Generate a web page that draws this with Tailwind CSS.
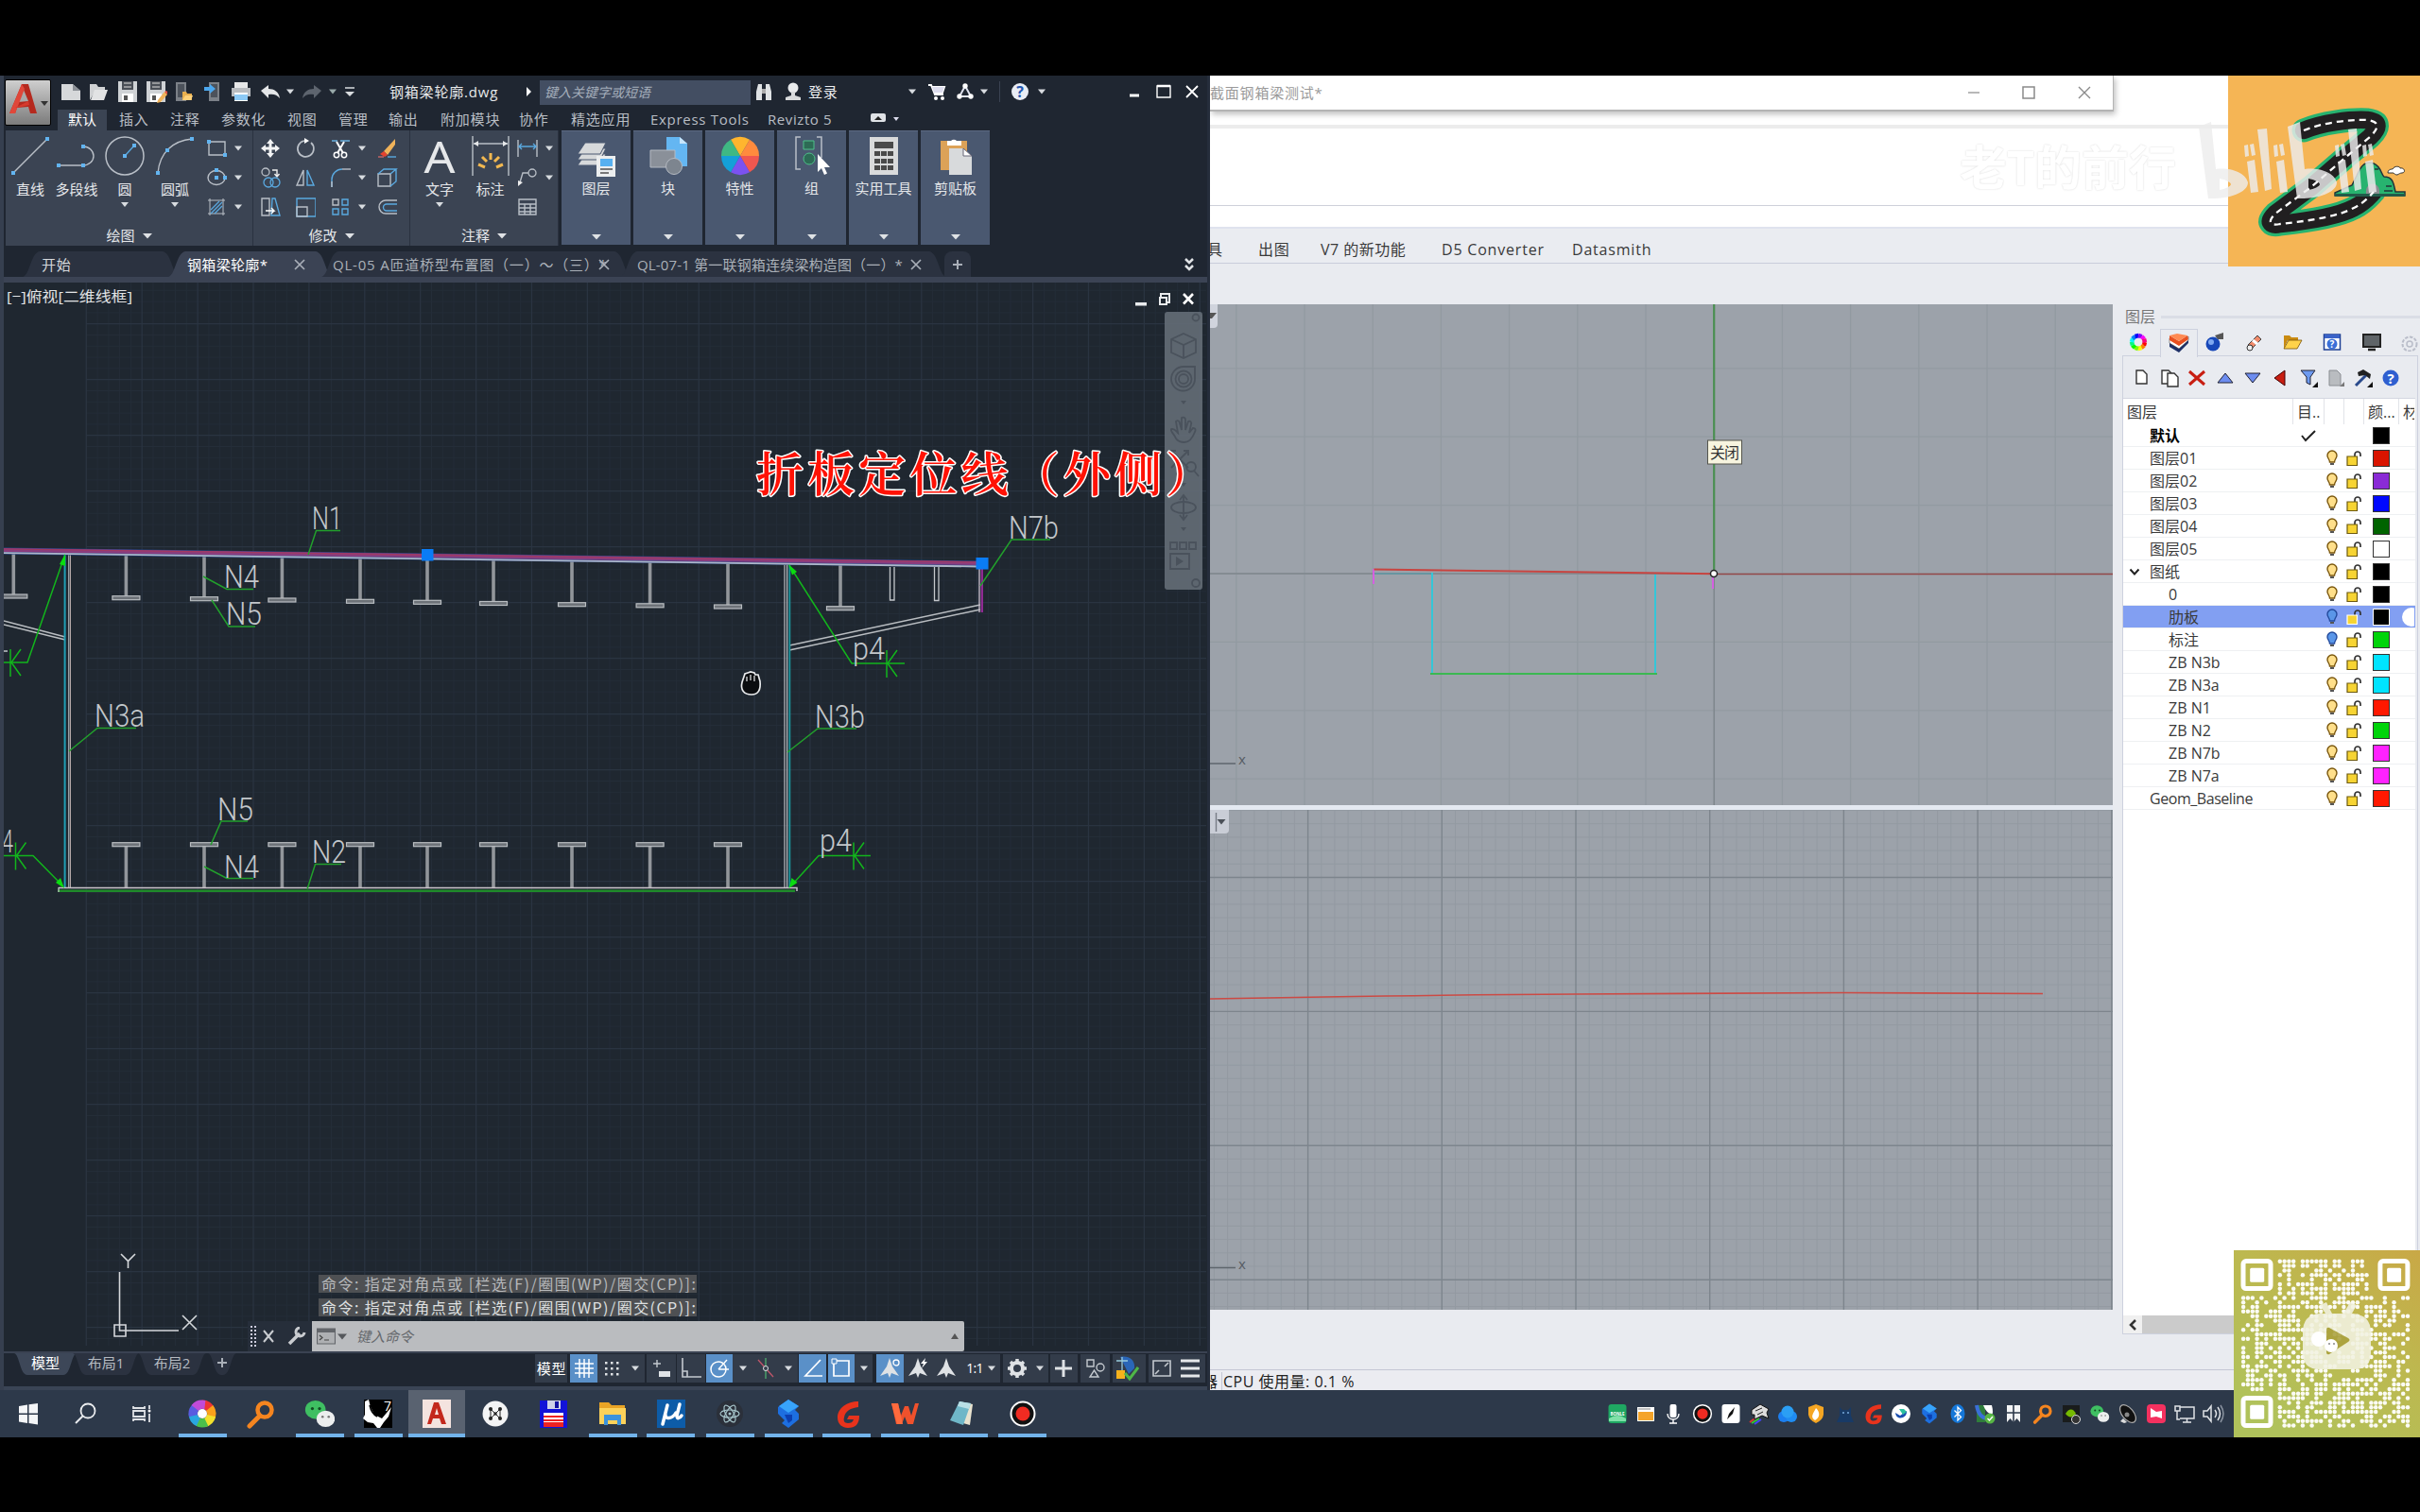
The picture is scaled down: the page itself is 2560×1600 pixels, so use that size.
<!DOCTYPE html>
<html lang="zh-CN">
<head>
<meta charset="utf-8">
<title>钢箱梁轮廓.dwg</title>
<script src="https://cdn.jsdelivr.net/npm/@tailwindcss/browser@4"></script>
</head>
<body class="bg-black w-[2560px] h-[1600px] overflow-hidden font-['Open_Sans','Noto_Sans_CJK_SC',sans-serif]">
<div class="flex flex-col w-[2560px] h-[1521px] pt-[80px] relative">
  <div class="flex h-[1391px]">
    <!-- CAD window -->
    <section class="w-[1280px] h-[1391px] bg-[#1f2631] border-l-[4px] border-r-[3px] border-[#363f4f] border-r-[#252d3b] flex flex-col relative text-[15px] leading-[18px] text-[#d6d9dd] overflow-hidden">
      <div id="title" class="h-[34px] flex items-center"></div>
      <div id="tabs" class="h-[24px] flex items-end"></div>
      <div id="ribbon" class="h-[122px] flex"></div>
      <div id="files" class="h-[33px] pt-[6px] flex items-stretch"></div>
      <div class="h-[6px] bg-[#3b4354] -mx-1 shrink-0"></div>
      <div class="h-[1131px] relative shrink-0">
        <svg id="cad" class="block" width="1273" height="1131" viewBox="4 299 1273 1131"></svg>
        <div class="absolute left-[333px] top-[1050px] flex flex-col gap-[6px]" id="hist"></div>
        <div class="absolute left-[258px] top-[1099px] flex h-[32px]" id="cmd"></div>
      </div>
      <div class="h-[37px] border-t-[2px] border-[#3a4252] flex items-start shrink-0">
        <div id="layouts" class="w-[562px] h-[22px] flex items-center"></div>
        <div id="status" class="h-[31px] flex items-center pt-px"></div>
      </div>
      <div class="h-[4px] bg-[#3a4455] -mx-1 shrink-0"></div>
      <div class="absolute left-px top-[4px] w-[49px] h-[49px] rounded-[2px] bg-gradient-to-b from-[#cfcfcf] to-[#7c7c7c] border border-black">
        <svg width="47" height="47" viewBox="0 0 47 47"><path d="M4 35L17 4h7l9 31h-7l-2-7-12 1-2 6z" fill="#b5291e"/><path d="M13 23l6-13 5 12z" fill="#a9a9a9"/><path d="M17 4L4 35h6L20 9z" fill="#e0473a"/><path d="M10 29l14-7 1 4-13 3z" fill="#d63a2d"/><path d="M37 22h8l-4 5z" fill="#333"/></svg>
      </div>
    </section>
    <!-- Modelling window -->
    <section class="w-[1280px] h-[1391px] bg-[#e9ebf0] flex flex-col relative overflow-hidden text-[#3a3a3a] text-[16px] leading-[20px]">
      <div class="h-[162px] bg-white flex flex-col shrink-0">
        <div id="rtitle" class="h-[38px] w-[956px] bg-white border-b-2 border-r border-[#b4b4b4] shadow-[2px_3px_6px_rgba(0,0,0,0.25)] flex items-center text-[15px] text-[#9a9a9a]"></div>
        <div class="mt-[14px] h-[4px] bg-[#ececec]"></div>
        <div class="mt-[81px] h-px bg-[#ced0da]"></div>
        <div class="mt-[22px] h-[2px] bg-[#dfe3ee]"></div>
      </div>
      <div id="rtabs" class="h-[37px] border-b-[1.5px] border-[#c9ccdb] bg-[#eaecf1] flex items-center shrink-0 pt-[7px]"></div>
      <div class="flex pt-[43px] h-[1170px] shrink-0">
        <div class="w-[955px] flex flex-col gap-[5px] bg-[#e4e9f1] h-[1064px]">
          <svg id="vp1" class="block" width="955" height="530" viewBox="1280 322 955 530"></svg>
          <svg id="vp2" class="block" width="955" height="529" viewBox="1280 857 955 529"></svg>
        </div>
        <div class="ml-[10px] w-[315px] flex flex-col">
          <div class="h-[26px] flex items-center pl-[3px] gap-[6px] text-[#777]"><span>图层</span><i class="block h-[3px] flex-1 bg-[#dadde6]"></i></div>
          <div id="ptabs" class="h-[28px] flex items-center relative"></div>
          <div class="border border-[#cdd1de] w-[313px] h-[1036px] flex flex-col pr-[2px]">
            <div id="ptools" class="h-[45px] pt-[2px] flex items-center border-b border-[#d3d6e0]"></div>
            <div class="bg-white flex-1 flex flex-col">
              <div id="phead" class="h-[27px] flex items-stretch"></div>
              <div id="rows" class="flex flex-col"></div>
            </div>
            <div class="h-[19px] flex bg-[#cbcbcb]"><div class="w-[20px] bg-[#f0f0f0] flex items-center justify-center"><svg width="12" height="14" viewBox="0 0 12 14"><path d="M9 2L4 7l5 5" fill="none" stroke="#333" stroke-width="2.5"/></svg></div></div>
          </div>
        </div>
      </div>
      <div id="rstatus" class="border-t border-[#c4c7d4] h-[22px] pt-[2px] bg-[#ebecf1] flex items-center shrink-0 text-[#222]"></div>
      <div class="absolute left-[793px] top-[62px] text-[50px] leading-[70px] font-bold text-white whitespace-nowrap [text-shadow:0_0_2px_#d4d4d4]">老T的前行</div>
      <svg class="absolute left-[1077px] top-0" width="203" height="202" viewBox="2357 80 203 202" id="zlogo"></svg>
      <svg class="absolute left-[1040px] top-[40px]" width="210" height="100" viewBox="2320 120 210 100" id="bili"></svg>
    </section>
  </div>
  <div id="task" class="h-[50px] bg-[#2d394a] flex items-stretch"></div>
  <svg class="absolute left-[2363px] top-[1323px]" id="qr" width="197" height="198" viewBox="0 0 197 198"></svg>
</div>
<script>
const $=id=>document.getElementById(id);
const T=(x,w,s,c='')=>[x,w,`<span data-fit="${w}" class="whitespace-nowrap ${c}">${s}</span>`];
const G=(w,h,b)=>`<svg class="block shrink-0" width="${w}" height="${h}" viewBox="${-w/2} ${-h/2} ${w} ${h}" fill="none">${b}</svg>`;
const I=(cx,w,h,b)=>[cx-w/2,w,G(w,h,b)];
// children laid out in flow; the margin is the distance from the previous child
const cells=(start,items,c='flex items-center')=>{let p=start,o='';for(const [x,w,h,k] of items){o+=`<div class="${c} shrink-0 ${k||''}" style="width:${w}px;margin-left:${x-p}px">${h}</div>`;p=x+w}return o};
const car=(x,c='#d8dce0',s=4)=>I(x,10,8,`<path d="M${-s} -2.5h${2*s}l${-s} ${s+1}z" fill="${c}"/>`);
const W='#d9dcdf',B='#5aa9e0';

// ---------- title bar ----------
const disk=`<path d="M-10 -11h20v22h-20z" fill="#cfd2d5"/><path d="M-6 -11h12v9h-12z" fill="#4a4f57"/><path d="M-4 -9h8M-4 -5h8" stroke="#ddd"/><path d="M-6 2h12v9h-12z" fill="#fff"/><path d="M-4 4h4v5h-4z" fill="#555"/>`;
$('title').innerHTML=cells(4,[
 I(75,22,22,`<path d="M-10 -8h12l8 7v10h-20z" fill="#d6d8da"/><path d="M2 -8v7h8z" fill="#8b8f95"/>`),
 I(104,22,22,`<path d="M-9 9v-17h7l2 3h7v4h-10z" fill="#d0d2d4"/><path d="M-8 9l4-11h14l-4 11z" fill="#e2e3e4"/>`),
 I(135,22,22,disk),
 I(165,24,24,disk+`<path d="M2 9l7-9 3 3-7 8-4 1z" fill="#f0b35a"/><path d="M9 0l3 3 1-2-2-2z" fill="#e54"/>`),
 I(194,22,24,`<path d="M-8 -10h11v20h-11z" fill="#7c8188"/><path d="M-6 -8h7v14h-7z" fill="#4c525b"/><path d="M-1 9v-9h4l1 2h5v7z" fill="#e9b04f"/><path d="M-1 9l3-5h8l-2 5z" fill="#ffd27a"/>`),
 I(225,22,24,`<path d="M-4 -10h11v20h-11z" fill="#7c8188"/><path d="M-2 -8h7v14h-7z" fill="#4c525b"/><path d="M-9 -5h6v-3l6 5-6 5v-3h-6z" fill="#4ba7ee"/>`),
 I(255,22,22,`<path d="M-7 -10h14v6h-14z" fill="#e6e7e8"/><path d="M-10 -4h20v9h-20z" fill="#b9bcc0"/><path d="M-7 1h14v9h-14z" fill="#fff"/><path d="M-7 3h14v6h-14z" fill="#8cc9f5"/>`),
 I(286,22,16,`<path d="M-10 -1l8-6v4c6 0 11 3 12 10-3-4-7-5-12-4v4z" fill="#e4e6e8"/>`),car(307),
 I(330,22,16,`<path d="M10 -1l-8-6v4c-6 0-11 3-12 10 3-4 7-5 12-4v4z" fill="#5d646e"/>`),car(352,'#9aa'),
 I(370,12,12,`<path d="M-5 -4h10" stroke="${W}" stroke-width="1.5"/><path d="M-5 0h10l-5 5z" fill="${W}"/>`),
 T(412,110,'钢箱梁轮廓.dwg','text-[#e6e8ea]'),
 I(560,8,12,`<path d="M-3 -5l5 5-5 5z" fill="#fff"/>`),
 [571,223,'<span class="whitespace-nowrap italic text-[14px] text-[#a4adba] ml-[5px]">键入关键字或短语</span>','bg-[#434e62] h-[26px] mt-px'],
 I(808,20,20,`<path d="M-8 9v-9l2-8h4v17zM8 9v-9l-2-8h-4v17z" fill="#dfe2e4"/><path d="M-2 -3h4v5h-4z" fill="#aaa"/>`),
 I(839,18,22,`<circle cy="-4" r="5.5" fill="#e8eaec"/><path d="M-2 0h4v4l6 2v3h-16v-3l6-2z" fill="#d8dadc"/>`),
 T(855,31,'登录','text-[#eceef0]'),car(965),
 I(991,20,20,`<path d="M-9 -7h3l4 10h9M-5 -5h13l-2 6h-9" stroke="#fff" stroke-width="2"/><path d="M-5 -5h13l-2 6h-9z" fill="#dde"/><circle cx="-1" cy="7" r="2" fill="#fff"/><circle cx="6" cy="7" r="2" fill="#fff"/>`),
 I(1021,22,20,`<path d="M0 -6L-6 5H6z" stroke="#dfe3f0" stroke-width="2"/><circle cy="-6" r="2.7" fill="#fff"/><circle cx="-6" cy="5" r="2.7" fill="#fff"/><circle cx="6" cy="5" r="2.7" fill="#fff"/>`),car(1041),
 [1057,1,'','bg-[#3a4252] h-[22px]'],
 I(1079,20,20,`<circle r="9" fill="#e9edf4"/><text y="6" text-anchor="middle" font-size="16" font-weight="700" fill="#2456b0">?</text>`),car(1102),
 I(1200,12,12,`<path d="M-5 4h10" stroke="#fff" stroke-width="3"/>`),
 I(1231,18,18,`<path d="M-7 -6h14v12h-14z" stroke="#fff" stroke-width="1.4"/><path d="M-7 -6h14" stroke="#fff" stroke-width="2.5"/>`),
 I(1261,16,16,`<path d="M-6 -6L6 6M6 -6L-6 6" stroke="#fff" stroke-width="1.8"/>`)]);

const tb=(x,w,s)=>[x,w,`<span data-fit="${w}" class="whitespace-nowrap text-[#b9bec5]">${s}</span>`,'h-[22px] pb-[2px]'];
$('tabs').innerHTML=cells(4,[[61,52,'<span class="text-white ml-[11px] whitespace-nowrap">默认</span>','bg-[#3b4453] h-[22px] pb-[2px]'],
 tb(126,30,'插入'),tb(180,30,'注释'),tb(234,46,'参数化'),tb(304,30,'视图'),tb(358,30,'管理'),tb(411,31,'输出'),tb(466,60,'附加模块'),tb(549,31,'协作'),tb(604,60,'精选应用'),tb(688,99,'Express Tools'),tb(812,67,'Revizto 5'),
 I(929,18,22,`<rect x="-8" y="-7" width="16" height="9" rx="2" fill="#dfe2e6"/><path d="M-4 0h8l-4-4z" fill="#222"/>`),I(948,10,20,`<path d="M-3 -4h6l-3 4z" fill="#dde"/>`)]);

// ---------- ribbon ----------
const big=(w,svg,label,c)=>`<div class="shrink-0 flex flex-col items-center text-[#e4e6e9]" style="width:${w}px"><div class="h-[53px] flex items-center">${svg}</div><span class="whitespace-nowrap leading-[18px]">${label}</span>${c?G(10,14,'<path d="M-4 -2h8l-4 5z" fill="#d8dce0"/>'):''}</div>`;
const small=(w,icons)=>`<div class="shrink-0 flex flex-col pt-[3px]" style="width:${w}px">${icons.map(([s,c])=>`<div class="h-[31px] flex items-center gap-[7px]">${G(22,22,s)}${c?G(10,8,'<path d="M-4 -2.5h8l-4 5z" fill="#d8dce0"/>'):''}</div>`).join('')}</div>`;
const dot=(x,y)=>`<path d="M${x-2} ${y-2}h4v4h-4z" fill="#62b4f0"/>`;
const panel=(w,inner,title)=>`<div class="shrink-0 bg-[#3b4453] border-r border-[#2a3240] flex flex-col" style="width:${w}px"><div class="h-[98px] flex">${inner}</div><div class="flex-1 flex items-start justify-center gap-[8px] pt-[4px] text-[#e4e6e9]"><span>${title}</span>${G(10,18,'<path d="M-5 -2h10l-5 5.5z" fill="#dfe2e5"/>')}</div></div>`;
const S=(d,c='#b9bfc7',w=1.4)=>`<path d="${d}" stroke="${c}" stroke-width="${w}"/>`;
const draw=panel(262,`<div class="w-[2px]"></div>`+
 big(48,G(44,44,S('M-18 18L18 -18')+dot(-18,18)+dot(18,-18)),'直线')+
 big(50,G(44,44,S('M-19 10H7A11 10 0 0 0 7 -10')+dot(-19,10)+dot(7,10)+dot(7,-10)),'多段线')+
 big(52,G(44,44,`<circle r="20" stroke="#b9bfc7" stroke-width="1.5"/>`+S('M0 0L10 -11',B)+dot(0,0)+dot(10,-11)),'圆',1)+
 big(54,G(44,44,S('M-18 18C-16 -4 -2 -16 18 -18')+dot(-18,18)+dot(-8,-6)+dot(18,-18)),'圆弧',1)+`<div class="w-[6px]"></div>`+
 small(48,[[S('M-8 -7h17v14h-17z')+dot(-8,-7)+dot(9,7),1],[`<ellipse rx="9" ry="7.5" stroke="#b9bfc7" stroke-width="1.4"/>`+dot(0,0)+dot(0,-8)+dot(9,0),1],[S('M-9 -7h18M-9 7h18M-7 -9v18M7 -9v18','#b9bfc7',1)+S('M-6 3l9-9M-6 7l12-12M-2 7l8-8',B,1.3),1]]),'绘图');
const mod=panel(166,`<div class="w-[7px]"></div>`+
 small(37,[[`<path d="M0 -10l4 5h-2.5v3.5h3.5v-2.5l5 4-5 4v-2.5h-3.5v3.5h2.5l-4 5-4-5h2.5v-3.5h-3.5v2.5l-5-4 5-4v2.5h3.5v-3.5h-2.5z" fill="#f2f3f4"/>`],[`<circle cx="-5" cy="-6" r="4" stroke="#b9bfc7" stroke-width="1.3"/>`+S('M2 -8h5v6M4.500 -4l2.500 3 2.500 -3','#eee')+`<circle cx="-2" cy="5" r="5" stroke="${B}" stroke-width="1.3"/><circle cx="5" cy="5" r="5" stroke="${B}" stroke-width="1.3"/>`],[S('M-9 -9h8v18h-8z')+S('M2 -9h3l5 18h-9z',B)+S('M-5 4h9l-3-3M4 4l-3 3','#fff')]])+
 small(37,[[S('M6 -6A8.500 8.500 0 1 1 -1 -8','#b9bfc7',1.7)+`<path d="M-1 -11l5 3-5 3z" fill="#fff"/>`],[S('M-2 -8v16h-7z')+S('M2 -8v16h7z',B)],[S('M-9 -9h20v19h-20z',B)+S('M-9 0h11v10h-11z')]])+
 small(50,[[S('M-9 -8h6M0 -8h10','#6bb0e0',1.3)+S('M-4 -7L3 5M4 -7L-3 5','#fff',2)+`<circle cx="-4" cy="7" r="2.7" stroke="#fff" stroke-width="1.5"/><circle cx="4" cy="7" r="2.7" stroke="#fff" stroke-width="1.5"/>`,1],[S('M-9 10v-8A11 11 0 0 1 2 -9',B)+S('M2 -9h9')+S('M-9 10V4'),1],[S('M-8 -8h6v6h-6z')+S('M2 -8h6v6h-6zM-8 2h6v6h-6zM2 2h6v6h-6z',B),1]])+
 small(30,[[`<path d="M-4 3L8 -10v6L0 7z" fill="#f0b35a"/><path d="M-4 3l4 4-3 2-5-3z" fill="#e5432f"/>`+S('M-10 9h6','#c66')+S('M0 9h9',B)],[S('M-10 -4h13v13h-13z')+S('M-10 -4l6-5h13l-6 5M9 -9v13l-6 5',B)],[S('M10 -7h-12a7 7 0 0 0 0 14h12')+S('M10 -3h-11a3.500 3.500 0 0 0 0 7h11',B)]]),'修改');
const ray=[[-13,5,-6,9],[-9,-3,-4,3],[0,-7,0,1],[9,-3,4,3],[13,5,6,9]].map(a=>`M${a[0]} ${a[1]+4}L${a[2]} ${a[3]+3}`).join('');
const ann=panel(157,`<div class="w-[3px]"></div>`+
 big(56,G(40,44,`<text y="18" text-anchor="middle" font-size="46" textLength="33" lengthAdjust="spacingAndGlyphs" fill="#e6e8ea" font-family="Noto Sans">A</text>`),'文字',1)+
 big(51,G(44,44,S('M-19 -21v42M19 -21v42M-18 -13h36')+`<path d="M-18 -13l5-3v6zM18 -13l-5-3v6z" fill="#e6e8ea"/>`+S(ray,'#f2b850',3)),'标注')+`<div class="w-[3px]"></div>`+
 small(42,[[S('M-10 -9v18M10 -9v18')+S('M-9 -2h18M-6 -5l-3 3 3 3M6 -5l3 3-3 3',B),1],[`<circle cx="5" cy="-5" r="4" stroke="#b9bfc7" stroke-width="1.3"/>`+S('M1 -5h-6l-3 10')+`<path d="M-10 9l0-6 5 2z" fill="#eee"/>`,1],[S('M-9 -8h18v16h-18zM-9 -3h18M-9 1h18M-9 5h18M-3 -3v11M3 -3v11')]]),'注释');
const col=(svg,label)=>`<div class="shrink-0 w-[73px] h-[121px] bg-[#4a5870] border-t border-[#5b6982] ml-[3px] flex flex-col items-center text-[#e4e6e9]"><div class="h-[51px] flex items-center">${svg}</div><span class="whitespace-nowrap leading-[18px]">${label}</span><div class="flex-1"></div>${G(10,16,'<path d="M-5 -3h10l-5 5.500z" fill="#dfe2e5"/>')}</div>`;
const pie=['#ffb52e','#ff8b3d','#f0574f','#7b52f0','#14a0d8','#3fb883'].map((c,i)=>{const r=20,a=(i*60-120)*Math.PI/180,b=a+Math.PI/3;return`<path d="M0 0L${r*Math.cos(a)} ${r*Math.sin(a)}A${r} ${r} 0 0 1 ${r*Math.cos(b)} ${r*Math.sin(b)}z" fill="${c}"/>`}).join('');
$('ribbon').innerHTML=`<div class="w-[2px] shrink-0"></div>`+draw+mod+ann+
 col(G(50,46,[10,4,-2].map(y=>`<path d="M-20 ${y}l8-12h22l-6 12z" fill="#d7d9db" stroke="#4a5870"/>`).join('')+`<path d="M0 0h20v22H0z" fill="#eceeef"/><path d="M4 3h13v8H4z" fill="#57b0f0"/><path d="M4 14h13M4 18h9" stroke="#777" stroke-width="2"/>`),'图层')+
 col(G(44,42,`<path d="M-2 -20h14l8 7v24h-22z" fill="#64b6f2"/><path d="M12 -20v7h8z" fill="#c7e5fb"/><path d="M-19 -6h26v18h-26z" fill="#8a9099" stroke="#b5bac2"/><circle cx="6" cy="11" r="8.500" fill="#7d858f" stroke="#b5bac2"/>`),'块')+
 col(G(44,44,pie),'特性')+
 col(G(44,44,`<path d="M-12 -20h-5v34h5M5 -20h5v22" stroke="#b9bfc7" stroke-width="1.5"/><path d="M-9 -16h11v9h-11z" fill="#2d6b55" stroke="#4fc08a"/><circle cx="-3" cy="3" r="6" fill="#2d6b55" stroke="#4fc08a"/><path d="M6 -2v19l4-4 3 7 3-1.500-3-6.500h6z" fill="#fff"/>`),'组')+
 col(G(40,44,`<path d="M-15 -20h30v40h-30z" fill="#d9dadb"/><path d="M-10 -15h20v7h-20z" fill="#4a4a4a"/>`+[-10,-3,4].map(x=>[-5,3,10].map(y=>`<path d="M${x} ${y}h6v5h-6z" fill="#4a4a4a"/>`).join('')).join('')),'实用工具')+
 col(G(44,44,`<path d="M-16 -16h28v31h-28z" fill="#dca258"/><path d="M-9 -16h4a4 4 0 0 1 6 0h5v5h-15z" fill="#fff"/><path d="M-7 -8h15l9 8v20h-24z" fill="#d8dadc"/><path d="M8 -8v8h9z" fill="#fff" stroke="#667"/>`),'剪贴板');

// ---------- document tabs ----------
const ft=(w,bg,s)=>`<div class="relative shrink-0 -mr-[12px] flex items-center" style="width:${w}px"><svg class="absolute inset-0" width="${w}" height="27" viewBox="0 0 ${w} 27"><path d="M0 27C8 25 8 2 18 0H${w-18}C${w-8} 2 ${w-8} 25 ${w} 27z" fill="${bg}"/></svg>${s}</div>`;
const fx=`<svg class="relative shrink-0" width="12" height="14" viewBox="0 0 12 14"><path d="M1 2l10 10M11 2L1 12" stroke="#a9afb8" stroke-width="1.700"/></svg>`;
const fl=(w,ml,c,t)=>`<div class="relative shrink-0 flex ${ml}" style="width:${w}px"><span class="whitespace-nowrap ${c}" data-fit="${w}">${t}</span></div>`;
$('files').innerHTML=`<div class="w-[20px] shrink-0"></div>`+
 ft(166,'#2b3240',fl(30,'ml-[20px]','','开始'))+
 ft(174,'#3b4354',fl(82,'ml-[20px]','text-white','钢箱梁轮廓*')+'<div class="w-[31px]"></div>'+fx)+
 ft(328,'#2b3240',fl(271,'ml-[12px]','text-[#aab0b8]','QL-05 A匝道桥型布置图（一）～（三）*')+'<div class="w-[10px]"></div>'+fx)+
 ft(345,'#2b3240',fl(280,'ml-[18px]','text-[#aab0b8]','QL-07-1 第一联钢箱连续梁构造图（一）*')+'<div class="w-[9px]"></div>'+fx)+
 `<div class="ml-[10px] w-[28px] bg-[#2b3240] rounded-t-[8px] flex items-center justify-center">${G(12,12,S('M-5 0h10M0 -5v10','#a9afb8',2))}</div><div class="w-[225px]"></div><div class="flex items-center">${G(12,18,S('M-4 -6l4 4 4-4M-4 1l4 4 4-4','#dfe2e5',2.500))}</div>`;

// ---------- drawing ----------
let s='';
let g1='',g2='';
for(let k=0,x=91.3;x<1275;k++,x=91.3+k*11.78)(k%5?g1+=`M${x.toFixed(1)} 299V1424`:g2+=`M${x.toFixed(1)} 299V1424`);
for(let k=-18,y;(y=519.7+k*11.8)<1425;k++)(k%5?g1+=`M91 ${y.toFixed(1)}H1276`:g2+=`M91 ${y.toFixed(1)}H1276`);
s+=`<rect x="4" y="299" width="1273" height="1131" fill="#1f2730"/><path d="${g1}" stroke="#242d38" fill="none"/><path d="${g2}" stroke="#2a3441" stroke-width="1.300" fill="none"/>`;
const tee=(x,y0,y1)=>{s+=`<path d="M${x} ${y0}V${y1}" stroke="#92969b" stroke-width="3.600"/><rect x="${x-14.5}" y="${(y0<800?y1:y0)-2}" width="29" height="4" fill="#6d7278" stroke="#b9bdc1" stroke-width="1.200"/>`};
[[14.3,631],[133.4,632.7],[216,633.7],[298.4,635],[381,636.3],[452,637.3],[522,638.5],[605,639.7],[687.6,640.8],[770,642],[889,643.7]].forEach(([x,y])=>tee(x,y-46,y));
[133.4,216,298.4,381,452,522,605,687.6,770].forEach(x=>tee(x,893.7,939));
const L=(d,c,w=1.5)=>s+=`<path d="${d}" stroke="${c}" stroke-width="${w}" fill="none"/>`;
L('M941.500 600v35h4.500v-35M988.500 600v35.500h4.500V600','#c4c8cc',1.3);
L('M4 657L69 674M4 661L69 677M835 683L1037 640M835 688L1037 645','#b9bdc1',1.5);
L('M72.800 587V939','#b9bdc1',1.2);L('M74.500 587V939','#b5a8a8',1);L('M68.600 587V939','#1f9fb5',2);
L('M830 598V939M832.600 598V939','#b9bdc1',1.2);L('M835.300 598V939','#1d8f98',2);
L('M62 939.500H843V943','#c9c3c9',1.5);L('M61 942.800H841','#1f8a2a',2.6);L('M62 939v5','#ccc',1.2);
L('M1036 600V648','#c4b8c8',1.4);L('M1038.800 600V648','#8e2b92',2.4);
L('M4 583L1039 597','#24468a',7);L('M4 582L1039 596','#8a3d7e',4);L('M4 581L1039 595','#a23a62',1.2);L('M4 585.200L1037 599.500','#aeb6c8',1.8);
const gr='#22a02c';
L('M360 561.500H334.500L326 587M268 623.500H240L215 610M270 663H242L224 635M144 770.500H103L73 795M262 869H234L223 894M268 929.500H240L216 917M361 914.500H333.500L325 941M1111 571H1070L1037 620M906 771H865L833 796',gr,1.5);
const g='#12b51c';
L('M957 702H901L838 603M921 905.500H866L839 935M4 701H29L67 592M4 905.500H35L64 935',g,1.5);
const kk=(x,y)=>L(`M${x} ${y-14}v29M${x+11} ${y-14}L${x+1} ${y}L${x+11} ${y+14}`,g,1.5);
kk(938,702);kk(903,905.5);kk(11,701);kk(16.5,905.5);
s+=`<g fill="#0bdc10"><path d="M834 597l9 8-5 3.500z"/><path d="M834.500 940l3-11 6 5z"/><path d="M69 586v13l-6-2z"/><path d="M68 940l-9-6 5-5z"/></g>`;
const lb=(t,x,w,y)=>s+=`<text x="${x}" y="${y}" textLength="${w}" lengthAdjust="spacingAndGlyphs" font-size="34" font-weight="300" font-family="Roboto,'Noto Sans',sans-serif" fill="#c3c7cb">${t}</text>`;
[['N1',330,32,560],['N4',237,37,622],['N5',239,38,661],['N3a',100,53,769],['N5',230,38,868],['N4',237,37,929],['N2',330,36,913],['N7b',1067,53,570],['p4',902,34,698],['N3b',862,53,770],['p4',867,34,901],['4',2,12,902]].forEach(a=>lb(...a));
L('M4 689h4','#c3c7cb',1.5);
s+=`<g fill="#0a7cf5"><rect x="446" y="581" width="12.500" height="12.500"/><rect x="1032.500" y="590" width="13" height="12.500"/></g>`;
// pan cursor
s+=`<path d="M785 722c-2 8 2 13 10 13 7 0 10-5 9-14l-2-7-3 0-1-2-4-1-3 1-3 1-1 3z" fill="#0b0d10" stroke="#e9ebed" stroke-width="1.700"/><path d="M790 716v5M794 714v6M798 715v6" stroke="#e9ebed" stroke-width="1.200"/>`;
// UCS icon
L('M126.500 1346V1408H189M121 1402h12v12h-12zM128 1327l7.500 7.500 7.500-7.500M135.500 1334.500V1342M193 1392l15 15M208 1392l-15 15','#d5d8db',1.600);
s+=`<text x="7" y="319" textLength="133" font-size="15" lengthAdjust="spacingAndGlyphs" fill="#e2e4e6">[−]俯视[二维线框]</text>`;
s+=`<path d="M1201 320h12v3.500h-12z" fill="#e9ebed"/><path d="M1228 316v-5h9v9h-3" fill="none" stroke="#e9ebed" stroke-width="2"/><path d="M1227 315h7v7h-7z" fill="none" stroke="#e9ebed" stroke-width="2"/><path d="M1252 311l10 10.500M1262 311l-10 10.500" stroke="#fff" stroke-width="2.600"/>`;
// navigation bar
s+=`<rect x="1232" y="330" width="40" height="294" rx="3" fill="#636b75" opacity=".92"/><g fill="none" stroke="#4a525c" stroke-width="1.800"><circle cx="1265" cy="336" r="3.500"/><path d="M1252 353l13 6v14l-13 6-13-6v-14zM1239 359l13 6 13-6M1252 365v14"/><path d="M1239 401a13 13 0 0 1 13-13h12v13a12.500 12.500 0 0 1-25 0z"/><circle cx="1252" cy="401" r="8.500"/><circle cx="1252" cy="401" r="5"/><path d="M1244 464c-2-5-6-7-5-10 3-1 5 2 7 4l-2-12c2-2 4 0 4 2l2 7v-13c2-1 4 0 4 2v11l3-9c2-1 4 1 3 3l-2 9 4-5c3 0 3 2 2 4-3 8-6 11-11 11s-7-1-9-4z"/><path d="M1239 477l18 18M1257 477l-18 18M1239 482v-5h5M1252 477h5v5"/><circle cx="1260" cy="494" r="5"/><path d="M1263 498l5 6M1252 525v24M1248 529l4-5 4 5M1248 545l4 5 4-5"/><ellipse cx="1252" cy="537" rx="13" ry="6"/><path d="M1238 574h7v7h-7zM1248 574h7v7h-7zM1258 574h7v7h-7zM1238 586h20v16h-20z"/><circle cx="1265" cy="617" r="4"/></g><path d="M1244 589l8 5-8 5zM1249 424h6l-3 4zM1249 511h6l-3 4zM1249 558h6l-3 4z" fill="#4a525c"/>`;
s+=`<text x="800" y="520" textLength="483" font-size="50" font-weight="600" font-family="'Noto Serif CJK SC','Noto Sans CJK SC',serif" fill="#ff1205" stroke="#fff" stroke-width="3" paint-order="stroke" stroke-linejoin="round">折板定位线（外侧）</text>`;
$('cad').innerHTML=s;

$('hist').innerHTML=['text-[#b7b9bb]','text-[#dfe0e1]'].map(c=>`<div class="w-[400px] h-[19px] pb-[2px] bg-[#4e5053] flex items-center pl-[3px] ${c}"><span data-fit="393" data-max="2" class="whitespace-nowrap text-[16px] font-['Noto_Sans_CJK_SC',sans-serif]">命令: 指定对角点或 [栏选(F)/圈围(WP)/圈交(CP)]:</span></div>`).join('');
$('cmd').innerHTML=`<div class="w-[68px] bg-[#262e3a] flex items-center">${cells(262,[
 I(268,10,24,[-10,-6,-2,2,6,10].map(y=>`<path d="M-3 ${y}h2M1 ${y}h2" stroke="#ccd" stroke-width="1.800"/>`).join('')),
 I(284,14,14,S('M-5 -6L5 6M5 -6L-5 6','#c9ccd0',2)),
 I(314,20,20,S('M-8 8L3 -3','#c9ccd0',3.500)+S('M8 -4a4.500 4.500 0 1 1 -5 -5','#c9ccd0',3))])}</div>
 <div class="w-[690px] bg-[#babcbf] rounded-r-[2px] flex items-center text-[#66696d] pb-px">${cells(330,[
 I(345,20,18,`<path d="M-9.500 -8h19v16h-19z" fill="#aeb0b3" stroke="#63666b" stroke-width="1.200"/><path d="M-9.500 -8h19v4h-19z" fill="#63666b"/>`+S('M-7 -1l3 2.500-3 2.500M-2 4h5','#444',1.200)),car(362,'#55585c',5),T(377,64,'键入命令','italic'),I(1010,10,10,'<path d="M-4 3h8l-4-6z" fill="#555"/>')])}</div>`;

// ---------- layout tabs and status bar ----------
const lt=(x,w,bg,t)=>[x,w,`<svg class="absolute left-0 top-0" width="${w}" height="23" viewBox="0 0 ${w} 23"><path d="M0 0C6 2 6 23 14 23H${w-14}C${w-6} 23 ${w-6} 2 ${w} 0z" fill="${bg}"/></svg><div class="relative w-full flex justify-center pb-[2px]">${t}</div>`,'relative h-[23px]'];
$('layouts').innerHTML=cells(4,[lt(15,66,'#3d4758','<span class="text-white">模型</span>'),lt(77,70,'#2b3240','<span class="text-[#b5bac1]">布局1</span>'),lt(146,72,'#2b3240','<span class="text-[#b5bac1]">布局2</span>'),lt(220,30,'#2b3240',G(12,12,S('M-5 0h10M0 -5v10','#a9afb8',2)))]);
const seg=(x,w,items,bl)=>[x,w,cells(x,items,'flex items-center justify-center'),'h-[30px] '+(bl||'bg-[#333c4a]')];
const blue='bg-[#5a90c8]';
const comp=`<path d="M0 -11l3 9 7 10-8-3-2 5-2-5-8 3 7-10z" fill="#dfe2e5"/>`;
$('status').innerHTML=cells(566,[
 seg(566,34,[T(568,31,'模型','text-white')]),
 seg(603,29,[I(617.5,24,24,S('M-5 -10v20M0 -10v20M5 -10v20M-10 -5h20M-10 0h20M-10 5h20','#fff',1.500))],blue),
 seg(632,50,[I(647,18,18,[-6,0,6].map(x=>[-6,0,6].map(y=>`<path d="M${x-1} ${y-1}h2.500v2.500h-2.500z" fill="#dfe2e5"/>`).join('')).join('')),car(672)]),
 seg(684,31,[I(700,22,22,S('M-9 -5h8M-5 -9v8','#c4c9cf')+`<path d="M-3 3h12v6h-12z" fill="#dfe2e5"/>`)]),
 seg(716,30,[I(731,22,22,S('M-9 -11v20h20M-9 3h5v6','#c4c9cf',1.600))]),
 seg(747,28,[I(761,24,24,`<circle cx="-1" cy="1" r="8" stroke="#fff" stroke-width="1.500"/>`+S('M-1 1L8 -9M-1 1h11','#fff'))],blue),
 seg(775,69,[car(785.500),I(810,22,22,S('M-8 -9l16 18','#c0566a',1.300)+S('M0 -11v22','#4fae6d',1.300)+`<circle r="2.500" fill="#333c4a" stroke="#dfe2e5"/>`),car(834)]),
 seg(845,29,[I(859.500,24,24,S('M8 -9L-8 8H10','#fff',1.700))],blue),
 seg(876,28,[I(890,24,24,S('M-8 -8h16v16h-16z','#fff',1.700)+`<path d="M-10 -10h5v5h-5z" fill="#5a90c8" stroke="#fff"/>`)],blue),
 seg(904,19,[car(914)]),
 seg(927,29,[I(941,24,24,comp+`<circle cx="7" cy="-6" r="3" stroke="#fff" stroke-width="1.300"/>`)],blue),
 seg(956,102,[I(971,24,24,comp+`<path d="M8 -11l-5 6h3l-2 5 6-7h-3z" fill="#fff"/>`),I(1001,22,24,comp),[1022,18,'<span class="text-white text-[14px] tracking-tighter">1:1</span>'],car(1049)]),
 seg(1061,48,[I(1076,22,22,`<circle r="6" stroke="#dfe2e5" stroke-width="4"/>`+S('M0 -10v3M0 10v-3M-10 0h3M10 0h-3M-7 -7l2 2M7 7l-2-2M7 -7l-2 2M-7 7l2-2','#dfe2e5',3.500)),car(1100)]),
 seg(1111,29,[I(1125,22,22,S('M-9 0h18M0 -9v18','#dfe2e5',3))]),
 seg(1143,31,[I(1158,22,22,S('M-8 -9h7v7h-7zM-5 9h9l-4.500-7z','#c4c9cf')+`<circle cx="6" cy="-1" r="4" stroke="#c4c9cf" stroke-width="1.400"/>`)]),
 seg(1177,35,[I(1192,26,26,`<path d="M-7 -12c10-2 16 4 15 12l-6 6z" fill="#2a66b8"/><path d="M-11 2h9v9h-9z" fill="#f5b21c"/>`+S('M-11 -8h12M-5 -12v14','#9cd',1.300)+S('M-2 5l5 6 9-12','#4fb648',3))]),
 seg(1215,60,[I(1229,22,22,S('M-9 -8h18v16h-18zM3 -2l4-4M-7 6l4-4','#c4c9cf',1.600)),I(1259,22,22,S('M-10 -8h20M-10 0h20M-10 8h20','#e6e8ea',3))])]);

// ---------- right window ----------
$('rtitle').innerHTML=cells(1280,[T(1280,109,'截面钢箱梁测试*'),I(2088,14,14,S('M-6 0h12','#9a9a9a')),I(2146,14,14,S('M-6 -6h12v12h-12z','#8a8a8a',1.500)),I(2205,14,14,S('M-6 -6L6 6M6 -6L-6 6','#8a8a8a'))]);
$('rtabs').innerHTML=cells(1280,[T(1277,16,'具'),T(1331,31,'出图'),T(1397,91,'V7 的新功能'),T(1525,101,'D5 Converter'),T(1663,78,'Datasmith')]);
$('rstatus').innerHTML=cells(1280,[T(1272,16,'器'),[1292,1,'','bg-[#c4c7d4] h-[20px]'],T(1294,136,'CPU 使用量: 0.1 %')]);
const vp=(y,h)=>`<rect x="1280" y="${y}" width="955" height="${h}" fill="#9ca2aa"/>`;
let a=vp(322,530),d='';
for(let x=1307.8;x<2235;x+=72.2)d+=`M${x.toFixed(1)} 322V852`;
for(let y=389.8;y<852;y+=72.4)d+=`M1280 ${y.toFixed(1)}H2235`;
a+=`<g fill="none"><path d="${d}" stroke="#929aa1" stroke-width="1.300"/><path d="M1280 607H1813M1813.300 607V852" stroke="#7f878d" stroke-width="1.500"/><path d="M1454 607H1516" stroke="#5f98a5" stroke-width="1.500"/><path d="M1813 607.500H2235" stroke="#93484a" stroke-width="1.700"/><path d="M1813.200 322V607" stroke="#4b8f52" stroke-width="2.200"/><path d="M1515 606V712M1751 608V712" stroke="#35c6d8" stroke-width="2"/><path d="M1513 713H1753" stroke="#3bb852" stroke-width="2"/><path d="M1453 602V618M1812 608V623" stroke="#d560e0" stroke-width="2"/><path d="M1453.500 602.500L1813 607.200" stroke="#c84440" stroke-width="2"/><circle cx="1813" cy="607" r="3.500" fill="#fff" stroke="#222" stroke-width="1.500"/><path d="M1280 808H1307" stroke="#5e656c" stroke-width="1.500"/></g><text x="1310" y="809" font-size="15" fill="#565c63">x</text><path d="M1280 322h8v21q0 4-4 4h-4z" fill="#d0d4dd"/><path d="M1280 331h7l-5 6h-2z" fill="#555"/><rect x="1806.500" y="466" width="36" height="25" fill="#f7f4df" stroke="#55554d"/><text x="1809" y="485" font-size="16" textLength="31" fill="#333">关闭</text>`;
$('vp1').innerHTML=a;
let b=vp(857,529),m='',M='';
for(let k=-7;k<61;k++){const x=(1383.6+k*14.17).toFixed(1);k%10?m+=`M${x} 857V1386`:M+=`M${x} 857V1386`}
for(let k=-5;k<33;k++){const y=(928.5+k*14.19).toFixed(1);k%10?m+=`M1280 ${y}H2235`:M+=`M1280 ${y}H2235`}
b+=`<g fill="none"><path d="${m}" stroke="#939aa2"/><path d="${M}" stroke="#7d858d" stroke-width="1.400"/><path d="M1280 1057L1400 1055Q1550 1052.500 1666 1052L1950 1050.500L2161 1051.500" stroke="#cc4a44" stroke-width="1.600"/><path d="M1280 1341.500H1307" stroke="#5e656c" stroke-width="1.500"/></g><text x="1310" y="1343" font-size="15" fill="#565c63">x</text><path d="M1280 857h20v21q0 4-4 4h-16z" fill="#c9cdd6"/><path d="M1286.500 860v20" stroke="#777c85" stroke-width="1.400"/><path d="M1287.500 867h9l-4.500 5.500z" fill="#4b5058"/>`;
$('vp2').innerHTML=b;

// ---------- layers panel ----------
const fold='<path d="M-9 7v-14h6l2 2h7v3h-11z" fill="#c98b12"/><path d="M-9 7l5-9h14l-5 9z" fill="#ffd24a" stroke="#7a5205" stroke-width=".8"/>';
const ring=Array.from({length:12},(_,i)=>{const p=t=>[7*Math.cos(t),7*Math.sin(t)],q=p(i*Math.PI/6),r=p((i+1.1)*Math.PI/6);return`<path d="M${q}L${r}" stroke="hsl(${i*30} 95% 50%)" stroke-width="4.500"/>`}).join('');
$('ptabs').innerHTML=cells(2245,[I(2262,20,20,ring),
 [2285,40,G(26,24,'<path d="M-10 -2l10 6 10-9v5L0 10l-10-6z" fill="#1d2f66"/><path d="M-10 -5l10 6 10-8v4L0 6l-10-6z" fill="#fff" stroke="#333" stroke-width=".5"/><path d="M-10 -8l10 6 9-6 1 4L0 3l-10-6z" fill="#e8501f"/><path d="M-10 -8l8-2 11 2-9 6z" fill="#ff8a52"/>'),'relative z-10 h-[30px] -mb-px justify-center border border-b-0 border-[#cdd1de] bg-[#e9ebf0]'],
 I(2343,22,22,'<circle cx="-2" cy="2" r="7.500" fill="#1747b8"/><circle cx="-4" cy="0" r="3" fill="#7fa8f0"/><path d="M0 -7l9-3v7h-6z" fill="#555"/>'),
 I(2385,22,22,'<path d="M-7 3l10-10 4 4L-3 7z" fill="#f08a6a" stroke="#444"/><path d="M-2 -2l5 4" stroke="#fff" stroke-width="3"/><circle cx="-5" cy="6" r="3" fill="#eee" stroke="#333"/>'),
 I(2425,22,20,fold),
 I(2467,22,22,'<path d="M-8.500 -8h17v16h-17z" fill="#fff" stroke="#1d3f94" stroke-width="1.500"/><path d="M-8 -8h16v4h-16z" fill="#3a62c8"/><circle cy="2" r="5.500" fill="#3a6fd8"/><text y="6" text-anchor="middle" font-size="10" font-weight="700" fill="#fff">?</text>'),
 I(2509,22,22,'<path d="M-9 -8h18v13h-18z" fill="#5f6468" stroke="#222" stroke-width="2"/><path d="M-4 8h8" stroke="#222" stroke-width="2.500"/>'),
 I(2549,18,20,'<circle r="7.500" cy="2" stroke="#b9bdc9" stroke-width="2" stroke-dasharray="3.500 1.500"/><circle r="3" cy="2" stroke="#b9bdc9" stroke-width="1.500"/>')]);
const page=(x,y)=>`<path d="M${x} ${y}h7l4 4v10h-11z" fill="#fff" stroke="#333" stroke-width="1.400"/>`;
const cm='<path d="M10 4v6h-6z" fill="#111"/>';
$('ptools').innerHTML=cells(2246,[I(2266,22,22,page(-6,-8)),I(2295,22,22,page(-8,-8)+page(-2,-5)),I(2324,22,22,S('M-8 -7L8 7M8 -7L-8 7','#c81e12',3)),
 I(2354,22,22,'<path d="M-8 5L0 -5 8 5z" fill="#6d8df0" stroke="#223" stroke-width="1"/>'),I(2383,22,22,'<path d="M-8 -5L0 5 8 -5z" fill="#6d8df0" stroke="#223" stroke-width="1"/>'),I(2412,22,22,'<path d="M5 -8L-6 0 5 8z" fill="#c81e12" stroke="#400"/>'),
 I(2442,22,22,'<path d="M-8 -8h15l-5 7v8l-4-2v-6z" fill="#6d9af0" stroke="#223"/>'+cm),I(2471,22,22,'<path d="M-7 -8h8l4 4v12h-12z" fill="#b9bcc0" stroke="#8a8d92"/><path d="M9 4v5h-5z" fill="#777"/>'),
 I(2500,22,22,S('M-8 8L3 -3','#2a4a8c',3)+'<path d="M-6 -6l6-3 8 5-1 5-5-4-7 1z" fill="#222"/>'+cm),I(2529,22,22,'<circle r="8.500" fill="#2f5fd0"/><text y="6" text-anchor="middle" font-size="15" font-weight="700" fill="#fff">?</text>')]);
$('phead').innerHTML=cells(2246,[[2246,179,'<span class="ml-[4px]">图层</span>'],[2425,33,'<span class="ml-[4px]">目..</span>','border-l border-[#e1e3e8]'],[2458,21,'','border-l border-[#e1e3e8]'],[2479,21,'','border-l border-[#e1e3e8]'],[2500,37,'<span class="ml-[4px] whitespace-nowrap">颜...</span>','border-l border-[#e1e3e8]'],[2537,17,'<span class="ml-[4px] w-[12px] overflow-hidden block">材</span>','border-l border-[#e1e3e8]']]);
const bulb=c=>G(16,20,`<path d="M-2.500 4C-2.500 1 -5 0 -5 -3A5 5 0 0 1 5 -3C5 0 2.500 1 2.500 4z" fill="${c}" stroke="${c=='#ffdf8a'?'#7a560c':'#234a9c'}" stroke-width="1.400"/><path d="M-2 6h4" stroke="#555" stroke-width="2"/>`);
const lock=sel=>G(20,20,`<path d="M1 -1v-3a3 3 0 0 1 6 0v2" stroke="#333" stroke-width="1.700"/><path d="M-7 -2h10.500v9.500h-10.500z" fill="#f7d433" stroke="${sel?'#fff':'#6d5a10'}" stroke-width="1.200"/>`);
$('rows').innerHTML=[['默认',0,'#000'],['图层01',0,'#d91400'],['图层02',0,'#8a2bd6'],['图层03',0,'#0008ff'],['图层04',0,'#006400'],['图层05',0,'#fff'],['图纸',0,'#000'],['0',1,'#000'],['肋板',1,'#000'],['标注',1,'#00d40a'],['ZB N3b',1,'#00e4ff'],['ZB N3a',1,'#00e4ff'],['ZB N1',1,'#ff1800'],['ZB N2',1,'#00d40a'],['ZB N7b',1,'#ff22ff'],['ZB N7a',1,'#ff22ff'],['Geom_Baseline',0,'#ff1800']].map(([n,l,c],i)=>{
 const sel=i==8,it=[];
 if(i==6)it.push(I(2258,12,10,S('M-4.500 -2.500L0 2.500l4.500-5','#222',2)));
 const x=l?2294:2274;it.push([x,120,`<span class="whitespace-nowrap ${i==0?'font-semibold text-black':i==16?'tracking-[-0.45px]':''}">${n}</span>`]);
 if(i==0)it.push(I(2442,18,16,S('M-7 0l4 5L7 -5','#222',2)));
 else it.push([2459,16,bulb(i==8||i==9?'#5a96e8':'#ffdf8a')],[2480,20,lock(sel)]);
 it.push([2510,18,`<i class="block w-full h-full" style="background:${c}"></i>`,'h-[18px] border '+(sel?'border-white':'border-[#333]')]);
 if(sel)it.push([2541,13,'<i class="block w-[20px] h-[20px] rounded-full bg-white shrink-0"></i>','overflow-hidden']);
 return `<div class="h-[24px] flex items-center border-b border-[#eef0f2] ${sel?'bg-[#829ff2]':''}">${cells(2246,it)}</div>`}).join('');

// ---------- road logo ----------
const road='M2437 138C2456 130 2486 126 2504 127C2519 129 2516 136 2507 145L2483 165L2446 197L2407 226C2397 236 2403 239 2412 237C2450 233 2475 228 2490 220C2502 214 2507 207 2511 203';
$('zlogo').innerHTML=`<rect x="2357" y="80" width="203" height="202" fill="#f5b555"/><g fill="none" stroke-linecap="round" stroke-linejoin="round"><path d="${road}" stroke="#27b36f" stroke-width="25"/><path d="${road}" stroke="#211f20" stroke-width="18.500"/></g><path d="M2470 207v-3l18-8 5-10c5-12 10-16 18-13 8 3 8 12 11 14 10 0 10 8 12 16h10v4z" fill="#27b36f" stroke="#22343a" stroke-width="1.500"/><path d="M2470 206.500h74" stroke="#225a4a" stroke-width="3"/><path d="M2503 205c-2-14 16-14 14 0z" fill="#8a8d90"/><path d="M2522 202h9M2524 197h6M2512 179h4" stroke="#22343a" stroke-width="1.500"/><path d="M2526 183c0-4 4-4 5-4 2-4 8-3 8-1 5-1 6 5 2 5-2 0-3 1-5 2-2 0-3-1-4-2z" fill="#fff" stroke="#333"/><path d="${road}" fill="none" stroke="#fff" stroke-width="2.300" stroke-dasharray="7 5"/>`;
const bb=(x,y)=>`<path d="M${x} ${y+5}l13-5 5 50c12-2 31 2 34 14 0 12-24 18-42 17zM${x+22} ${y+60}v12c6-1 12-4 12-6s-6-5-12-6z" fill-rule="evenodd"/>`;
const ii=(x,y)=>`<path d="M${x} ${y+1}l4-1 1 12-4 1zM${x+6} ${y}l4-1 2 12-4 1zM${x+3} ${y+18}l8-2 4 34-8 1z"/>`;
$('bili').innerHTML=`<g fill="#ededed" opacity=".82">${bb(2326,129)}${ii(2374,153)}<path d="M2388 137l10-1 5 64-7 2z"/>${ii(2405,153)}${bb(2420,129)}${ii(2470,153)}<path d="M2484 137l9-1 5 64-7 2z"/>${ii(2499,153)}</g>`;

// ---------- taskbar ----------
const wechat=(k)=>`<g transform="scale(${k})"><ellipse cx="-4" cy="-4" rx="10" ry="9" fill="#3fbf62"/><ellipse cx="6" cy="5" rx="9" ry="8" fill="#eceeee"/><circle cx="-7" cy="-5" r="1.500" fill="#114d22"/><circle cx="0" cy="-5" r="1.500" fill="#114d22"/><circle cx="3" cy="3" r="1.200" fill="#777"/><circle cx="9" cy="3" r="1.200" fill="#777"/></g>`;
const mag=k=>`<g transform="scale(${k})"><circle cx="4" cy="-4" r="7.500" stroke="#f5851f" stroke-width="4.500" fill="none"/><path d="M-2 3l-10 10" stroke="#f5851f" stroke-width="5" stroke-linecap="round"/></g>`;
const cube='<path d="M0 -15l11 7-4 4 4 4v6L0 15l-7-5 3-3-7-7v-7l4-3z" fill="#1d6fe0"/><path d="M0 -15l11 7-11 7-10-7z" fill="#38a4fa"/><path d="M-4 1h8v6l-4 3z" fill="#0b3fb0"/>';
const gg='<path d="M12 -13c-12 0-22 7-22 17 0 7 5 11 11 11 8 0 12-4 12-13h-11l-2 4h7c-1 3-3 4-6 4-4 0-5-3-4-6 1-7 7-10 15-11z" fill="#e8331c"/>';
const rec=k=>`<g transform="scale(${k})"><circle r="12.500" fill="#111" stroke="#fff" stroke-width="2"/><circle r="7.500" fill="#f02b22"/></g>`;
const tk=(cx,svg,u,act)=>[cx-30,60,`<div class="h-[50px] flex flex-col items-center w-full ${act?'bg-[#596270]':''}"><div class="h-[46px] flex items-center pt-[3px]">${G(32,32,svg)}</div>${u?`<div class="h-[4px] ${act?'w-[60px]':'w-[51px]'} bg-[#72b3ea]"></div>`:''}</div>`];
const swirl=['#e33','#f9a11b','#f2e02c','#4cc04b','#2aa6e0','#5a5be0','#c14bd8'].map((c,i)=>`<path transform="rotate(${i*51.4})" d="M0 -14.500A14.500 14.500 0 0 1 13 -6L5 -1A5 5 0 0 0 0 -5z" fill="${c}"/>`).join('');
const tr=(cx,svg)=>I(cx,26,26,svg);
$('task').innerHTML=cells(0,[
 tk(30,'<path d="M-10 -8l9-1.500v9h-9zM0.500 -9.800L10 -11v10.500H0.500zM-10 1h9v9l-9-1.500zM0.500 1H10v10.500L0.500 10z" fill="#f4f6f8"/>'),
 tk(90,'<circle cx="3" cy="-3" r="7.500" stroke="#e9ebee" stroke-width="1.800"/><path d="M-2.500 2.500L-10 10" stroke="#e9ebee" stroke-width="2"/>'),
 tk(150,S('M-9 -8v2h12v-2M-9 8v-2h12v2M-9 -3h12v6h-12zM8 -9v4M8 0v9','#dfe2e6',1.800)+'<circle cx="8" cy="-3" r="1.500" fill="#fff"/>'),
 tk(214,swirl+'<circle r="5" fill="#fff"/>',1),tk(276,mag(1)),tk(338,wechat(1.08),1),
 tk(400,'<path d="M-15 -15h30v30h-30z" fill="#000"/><path d="M-14 -13l4-2 2 8 4 8 8 4 10-12-3 10-5 6-4 6-3 0-4-5-6-1-5-4 2-4z" fill="#fff"/><path d="M-9 -9q2 9 8 12" stroke="#000" stroke-width="1.500"/><text x="6" y="-3" font-size="14" fill="#fff">7</text>',1),
 tk(462,'<path d="M-15 -15h30v30h-30z" fill="#f4e3df"/><path d="M-10 11L-3 -12h5l8 23h-5l-2-6h-7l-2 6zM-2 1h4l-2-7z" fill="#c3281d" fill-rule="evenodd"/>',1,1),
 tk(523.500,'<circle r="13.500" fill="#f3f4f5"/><path d="M-5 -5L5 5M5 -5L-5 5M-5 -5v10M5 -5v10" stroke="#222" stroke-width="1"/><g fill="#222"><circle cx="-5" cy="-5" r="2"/><circle cx="5" cy="-5" r="2"/><circle cx="-5" cy="5" r="2"/><circle cx="5" cy="5" r="2"/><circle r="1.700"/></g>'),
 tk(585.500,'<path d="M-15 -14h29v29h-29z" fill="#1212d8"/><path d="M-7 -14h14v9h-14z" fill="#cfd2e8"/><path d="M1 -13h4v7h-4z" fill="#1212a0"/><path d="M-11 -1h21v15h-21z" fill="#fff"/><path d="M-11 3h21M-11 7h21" stroke="#e22" stroke-width="2"/><path d="M-11 9h21v5h-21z" fill="#e22"/>'),
 tk(648,'<path d="M-14 -12h10l3 3h14v20h-27z" fill="#e9a425"/><path d="M-14 -6h28v17h-28z" fill="#fcd25a"/><path d="M-9 12v-11h18v11h-4v-5h-10v5z" fill="#3c93dc"/>',1),
 tk(709.500,'<path d="M-15 -15h30v30h-30z" fill="#0d5ca8"/><path d="M-4 -9l-5 20M-6 1c-1 5 7 5 11-2M9 -10L6 2c0 4 3 3 5 0" stroke="#fff" stroke-width="3.500" stroke-linecap="round"/>',1),
 tk(772,'<circle r="14" fill="#2b303a"/><g stroke="#a8c6cc" stroke-width="1.200"><ellipse rx="10" ry="4"/><ellipse rx="10" ry="4" transform="rotate(60)"/><ellipse rx="10" ry="4" transform="rotate(120)"/></g><circle r="1.500" fill="#a8c6cc"/>',1),
 tk(834,cube,1),tk(895.500,gg,1),
 tk(957,'<path d="M-14 -11h7l3 13 4-10h4l3 10 4-13h4L9 11H3L0 3l-3 8h-6z" fill="#f0512c"/><path d="M-14 -11h7l5 22h-6z" fill="#ff6a3d"/>',1),
 tk(1019,'<path d="M-4 -13l14 3-3 22-19-5z" fill="#e9e3cf"/><path d="M-4 -13l12 2-8 23-14-5z" fill="#6fb7c8"/><path d="M-4 -13l12 2-2 6-12-3z" fill="#b8dfe6"/>',1),
 tk(1081.500,rec(1),1),
 tr(1711,'<rect x="-9.500" y="-10" width="19" height="20" rx="3" fill="#1fa862"/><path d="M-9 5q9-6 18 0v3h-18z" fill="#7fe0a8"/><text y="2" text-anchor="middle" font-size="6" textLength="15" lengthAdjust="spacingAndGlyphs" font-weight="700" fill="#fff">BONLE</text>'),
 tr(1741,'<path d="M-9 -7h18v15h-18z" fill="#fff"/><path d="M-8 -2h16v9h-16z" fill="#f5a42a"/><path d="M-8 -5h13" stroke="#888"/>'),
 tr(1770,'<rect x="-3.500" y="-10" width="7" height="14" rx="2" fill="#fff"/>'+S('M-6 0c0 8 12 8 12 0M0 6v4M-4 10h8','#fff')),
 tr(1801,rec(.75)),
 tr(1831,'<rect x="-9.500" y="-10" width="19" height="20" rx="3" fill="#fff"/><path d="M-4 6l2-6 6-7-2 7z" fill="#111"/>'),
 tr(1861,'<path d="M-10 9l8-6" stroke="#d33" stroke-width="2"/><path d="M-8 10l8-5" stroke="#3c3" stroke-width="2"/><path d="M-5 11l7-5" stroke="#44f" stroke-width="2"/><path d="M-8 -4l9-6 9 5-2 4 2 6-7-3-8 4 0-5-3 0z" fill="#ddd" stroke="#111"/><path d="M-4 -3l7-3M-2 1l6-3" stroke="#222"/>'),
 tr(1891,'<circle cx="-4" cy="3" r="6" fill="#1c7ff0"/><circle cx="4" cy="3" r="6" fill="#1f8cf2"/><circle cy="-2" r="6.500" fill="#2b9ff4"/>'),
 tr(1921,'<path d="M0 -10l8 3v8q-1 6-8 9-7-3-8-9v-8z" fill="#f5a623"/><path d="M-1 7c-6-4-1-8 1-13 5 5 4 10-1 13z" fill="#fff"/>'),
 tr(1952,'<path d="M-6 -7l3 3h6l3-3v9l3 7h-18l3-7z" fill="#183a66"/><circle cx="-2" cy="-1" r="1" fill="#7ad"/><circle cx="3" cy="-1" r="1" fill="#7ad"/>'),
 tr(1981,`<g transform="scale(.75)">${gg}</g>`),
 tr(2011,'<circle r="10" fill="#fff"/><path d="M-6 -1l5 3 7-5c1 8-11 11-12 2z" fill="#1c4fb0"/><path d="M-2 -5h5l3 3-4 3z" fill="#2ac0a0"/>'),
 tr(2041,`<g transform="scale(.7)">${cube}</g>`),
 tr(2070.500,'<ellipse rx="7.500" ry="10" fill="#1577d8"/>'+S('M-3.500 -3.500L3.500 3.500 0 7v-14l3.500 3.500L-3.500 3.500','#fff',1.300)),
 tr(2100,'<path d="M-9 -9h9v18h-9z" fill="#2f7d3b"/><path d="M-2 -9h9q2 8 0 10-6-2-9-10z" fill="#fff"/><path d="M-9 -9c2 12 8 14 12 14" stroke="#3a6fd8" stroke-width="4"/><circle cx="5" cy="5" r="5.500" fill="#57b544"/>'+S('M2.500 5l2 2 3.500-4','#fff')),
 tr(2130,'<path d="M-7 -9h14v18l-3.500-4-3.500 4-3.500-4-3.500 4z" fill="#f3f4f5"/><path d="M0 -9v18M-7 -1h14" stroke="#2d394a" stroke-width="1.600"/>'),
 tr(2160.500,mag(.7)),
 tr(2191,'<path d="M-9 -9h18v18h-18z" fill="#191c1c"/><path d="M-6 0c4-7 9-5 11 0-4 5-8 4-11 0z" fill="#76b900"/><circle cx="5" cy="6" r="4.500" fill="#333" stroke="#ddd"/>'),
 tr(2221,wechat(.68)),
 tr(2251,'<ellipse rx="6" ry="11" transform="rotate(-40)" fill="#111" stroke="#aaa" stroke-width="1.200"/><path d="M-8 8l3-3 4 4-3 1z" fill="#ddd"/><circle cx="-1" cy="1" r="2.500" fill="#888"/>'),
 tr(2281,'<rect x="-10" y="-10" width="20" height="20" rx="4" fill="#f4315f"/><path d="M-6 -6l6 4 6-1v8l-6-2-6 1z" fill="#fff"/>'),
 tr(2311,S('M-5 -7h15v12h-15M-2 9h9M2.500 5v4M-8 -3v9h3M-10 -8h5v5h-5z','#dfe2e6',1.500)),
 tr(2340,S('M-9 -3h4l4-5v16l-4-5h-4zM3 -4q3 4 0 8M6 -7q5 7 0 14','#dfe2e6',1.500)+S('M9 -9q6 9 0 18','#8a93a0',1.500))],'flex items-center');

// ---------- QR code ----------
let q='<defs><linearGradient id="qg" x1="1" y1="0" x2=".3" y2="1"><stop offset="0" stop-color="#c9a846"/><stop offset=".45" stop-color="#bdb84f"/><stop offset="1" stop-color="#b0c25b"/></linearGradient></defs><rect width="197" height="198" fill="url(#qg)"/><g fill="#fbfbf4">',seed=11;
const rnd=()=>(seed=(seed*16807)%2147483647)/2147483647,P=4.83,X0=7.700,Y0=9.300;
for(let r=0;r<37;r++)for(let c=0;c<37;c++){if((r<8&&(c<8||c>28))||(r>28&&c<8))continue;if(rnd()<.53)q+=`<circle cx="${(X0+P*(c+.5)).toFixed(1)}" cy="${(Y0+P*(r+.5)).toFixed(1)}" r="2.250"/>`}
q+='</g>';
[[0,0],[30,0],[0,30]].forEach(([c,r])=>q+=`<rect x="${X0+P*c+2.3}" y="${Y0+P*r+2.3}" width="29" height="29" rx="3" fill="none" stroke="#fff" stroke-width="5"/><rect x="${X0+P*c+9.500}" y="${Y0+P*r+9.500}" width="15" height="15" rx="1.500" fill="#fff"/>`);
q+='<g opacity=".88"><path d="M91 58l7-3 6 12h12l7-12 7 3-5 9q20 1 20 20v22q0 17-18 17h-36q-18 0-18-17V87q0-19 18-20h6z" fill="#f3f3e2"/><path d="M98 84q0-3 3-2l20 11q3 2 0 4l-20 13q-3 1-3-2z" fill="#aaa03d"/></g><g fill="#fff"><circle cx="90" cy="94" r="8"/><circle cx="103" cy="101" r="7"/></g><circle cx="101" cy="99" r="1" fill="#888"/><circle cx="106" cy="99" r="1" fill="#888"/>';
$('qr').innerHTML=q;

// nudge letter spacing so each label takes up its column width
document.querySelectorAll('[data-fit]').forEach(e=>{const w=e.scrollWidth||e.getBoundingClientRect().width,n=[...e.textContent].length,v=(+e.dataset.fit-w)/n;e.style.letterSpacing=Math.max(-1,Math.min(+(e.dataset.max||.8),v))+'px'});
</script>
</body>
</html>
